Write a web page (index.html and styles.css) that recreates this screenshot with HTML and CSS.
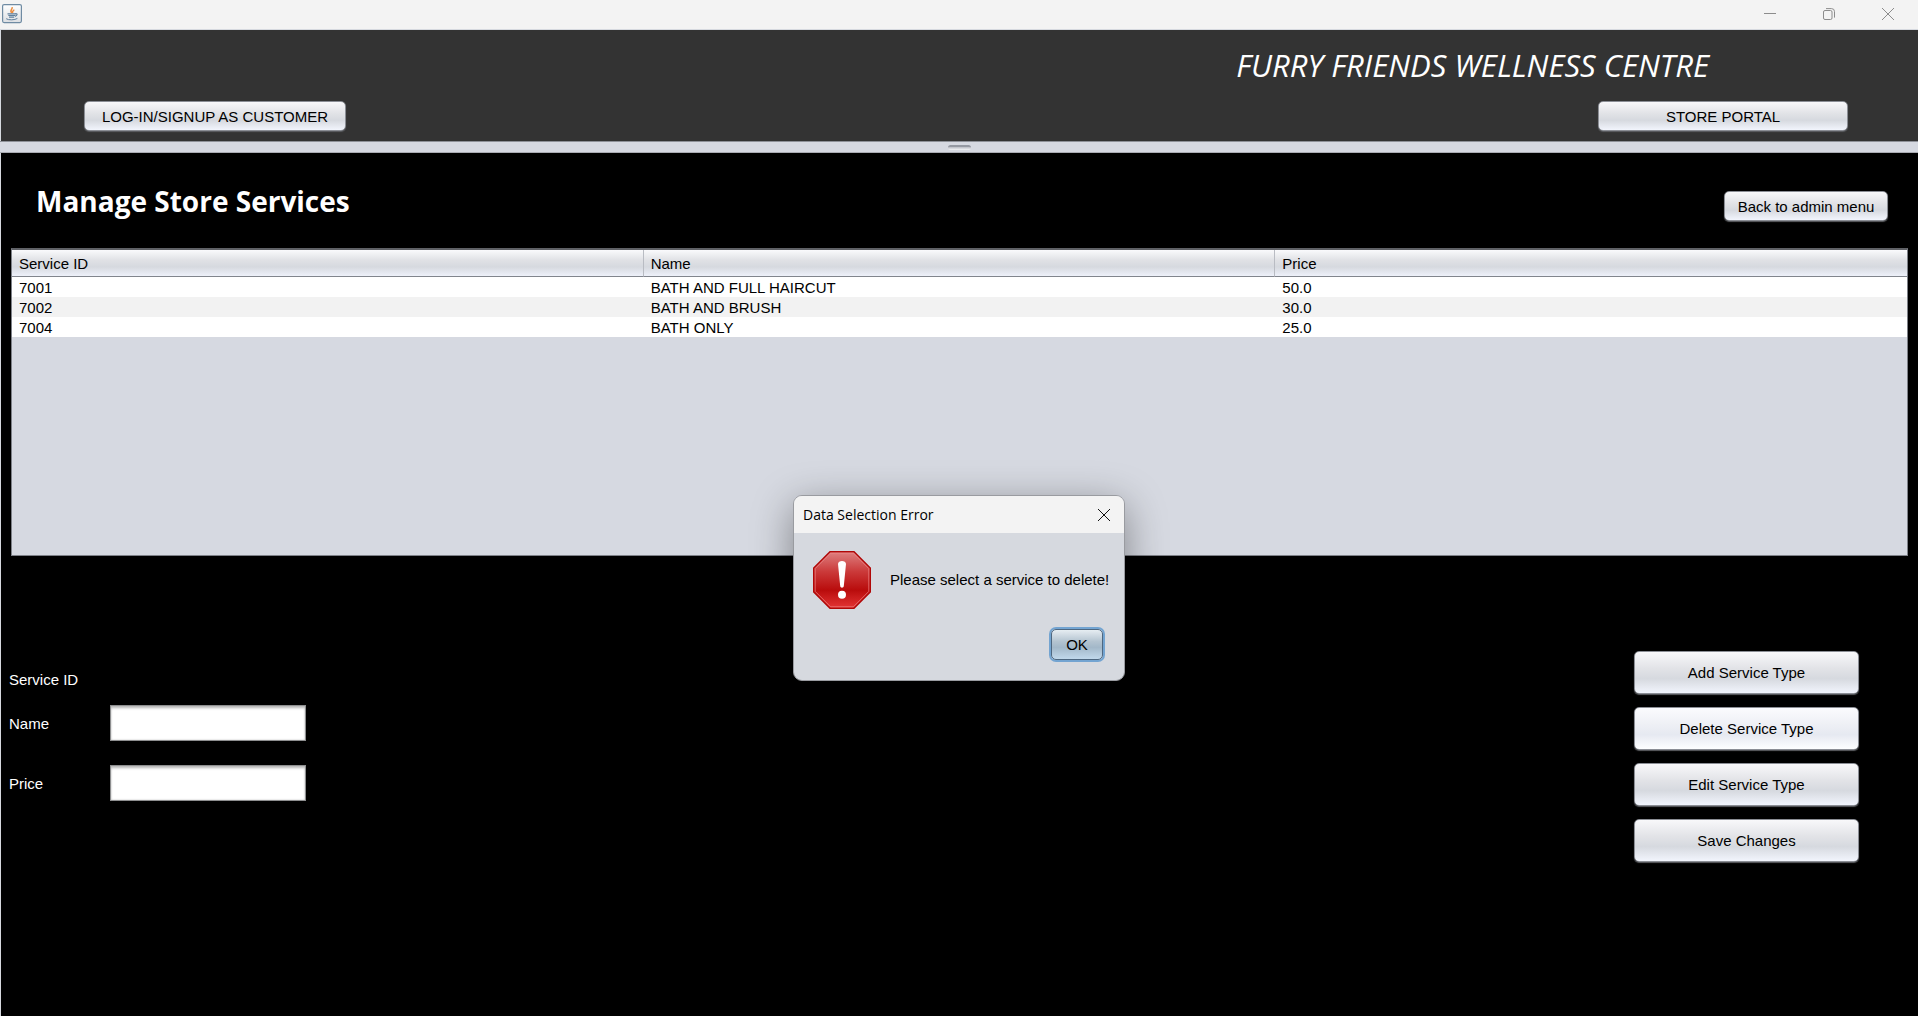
FILE: index.html
```html
<!DOCTYPE html>
<html lang="en">
<head>
<meta charset="utf-8">
<title>Furry Friends Wellness Centre</title>
<link rel="stylesheet" href="styles.css">
</head>
<body>
<div class="window">
  <div class="titlebar">
    <svg class="app-icon" viewBox="0 0 20 20" aria-hidden="true">
      <defs><linearGradient id="cup-bg" x1="0" y1="0" x2="0" y2="1"><stop offset="0" stop-color="#fff"/><stop offset="1" stop-color="#dcdfe3"/></linearGradient></defs>
      <rect x=".6" y=".6" width="18.8" height="18" rx="1.5" fill="url(#cup-bg)" stroke="#6f8ba3" stroke-width="1.2"/>
      <path d="M9.8 8.8C7.2 6.8 10.500 5.700 10.200 3.200M11.200 8.700C9.500 7.300 11.800 6.800 12 5.600" fill="none" stroke="#ec8b3c" stroke-width="1.500"/>
      <path d="M5.500 9.800h8.500M6.300 11.500h6.800M7 13.200h5.200M13.600 9.700c2.400-.3 1.600 2.100-.6 2.600" fill="none" stroke="#60809d" stroke-width="1.200"/>
      <path d="M4.200 14.700c2 1.600 8.800 1.500 11.200-.3" fill="none" stroke="#60809d" stroke-width="1"/>
    </svg>
    <div class="window-controls">
      <button class="window-control" type="button" aria-label="Minimize"><svg viewBox="0 0 12 12"><path d="M0 5.500h12"/></svg></button>
      <button class="window-control" type="button" aria-label="Restore"><svg viewBox="0 0 12 12"><rect x=".5" y="2.500" width="8.500" height="9" rx="1.500"/><path d="M3 .6h5.500q3 0 3 3v6"/></svg></button>
      <button class="window-control" type="button" aria-label="Close window"><svg viewBox="0 0 12 12"><path d="M0 0l12 12M12 0L0 12"/></svg></button>
    </div>
  </div>

  <header class="banner">
    <p class="brand">FURRY FRIENDS WELLNESS CENTRE</p>
    <nav class="banner-actions">
      <button class="button button-login" type="button">LOG-IN/SIGNUP AS CUSTOMER</button>
      <button class="button button-portal" type="button">STORE PORTAL</button>
    </nav>
  </header>

  <div class="splitter"><span class="splitter-grip"></span></div>

  <main class="panel">
    <div class="panel-head">
      <h1 class="panel-title">Manage Store Services</h1>
      <button class="button button-back" type="button">Back to admin menu</button>
    </div>

    <div class="table-pane">
      <table class="services">
        <thead><tr><th>Service ID</th><th>Name</th><th>Price</th></tr></thead>
        <tbody>
          <tr><td>7001</td><td>BATH AND FULL HAIRCUT</td><td>50.0</td></tr>
          <tr><td>7002</td><td>BATH AND BRUSH</td><td>30.0</td></tr>
          <tr><td>7004</td><td>BATH ONLY</td><td>25.0</td></tr>
        </tbody>
      </table>
    </div>

    <div class="editor">
      <form class="service-form">
        <span class="service-id">Service ID</span>
        <div class="field"><label for="name">Name</label><input id="name" type="text"></div>
        <div class="field"><label for="price">Price</label><input id="price" type="text"></div>
      </form>
      <div class="service-actions">
        <button class="button button-tall" type="button">Add Service Type</button>
        <button class="button button-tall button-hover" type="button">Delete Service Type</button>
        <button class="button button-tall" type="button">Edit Service Type</button>
        <button class="button button-tall" type="button">Save Changes</button>
      </div>
    </div>
  </main>

  <div class="dialog" role="alertdialog" aria-labelledby="dialog-title" aria-describedby="dialog-message">
    <div class="dialog-titlebar">
      <h2 class="dialog-title" id="dialog-title">Data Selection Error</h2>
      <button class="dialog-close" type="button" aria-label="Close"><svg viewBox="0 0 12 12"><path d="M0 0l12 12M12 0L0 12"/></svg></button>
    </div>
    <div class="dialog-body">
      <svg class="error-icon" viewBox="0 0 58 58" aria-hidden="true">
        <defs><linearGradient id="stop-red" x1="0" y1="0" x2="0" y2="1"><stop offset="0" stop-color="#de8080"/><stop offset=".35" stop-color="#cb3a3a"/><stop offset=".68" stop-color="#b90c0c"/><stop offset="1" stop-color="#e43535"/></linearGradient></defs>
        <path d="M17 .7h24L57.300 17v24L41 57.300H17L.7 41V17z" fill="url(#stop-red)" stroke="#b00808" stroke-width="1.400"/>
        <path d="M17.600 2.200h22.800L55.800 17.600v22.800L40.400 55.800H17.600L2.200 40.400V17.600z" fill="none" stroke="#e88" stroke-opacity=".7"/>
        <path d="M25 13c0-4 8-4 8 0l-2.200 22c-.2 2.300-3.400 2.300-3.600 0z" fill="#fff"/>
        <circle cx="29" cy="43.800" r="4" fill="#fff"/>
      </svg>
      <p class="dialog-message" id="dialog-message">Please select a service to delete!</p>
    </div>
    <div class="dialog-footer"><button class="button button-ok" type="button">OK</button></div>
  </div>
</div>
</body>
</html>
```
FILE: styles.css
```css
* { box-sizing: border-box; }

body {
  margin: 0;
  background: #000;
  color: #000;
  font: 15px/20px "Liberation Sans", Arial, sans-serif;
}

h1, h2, p { margin: 0; font-weight: normal; }

button, input { font: inherit; color: inherit; }

.window {
  position: relative;
  display: flex;
  flex-direction: column;
  min-height: 100vh;
}

/* Window frame */
.titlebar {
  display: flex;
  align-items: center;
  justify-content: space-between;
  height: 30px;
  padding: 0 1px 2px 2px;
  background: #f3f3f3;
  border-bottom: 1px solid #d6d9df;
}

.app-icon { width: 20px; height: 20px; }

.window-controls { display: flex; }

.window-control {
  display: grid;
  place-items: center;
  width: 59px;
  height: 28px;
  padding: 0;
  border: 0;
  background: none;
}

.window-control svg,
.dialog-close svg {
  width: 12px;
  height: 12px;
  overflow: visible;
  fill: none;
  stroke: #8c8c8c;
}

/* Buttons */
.button {
  height: 30px;
  padding: 1px 0 0;
  border: 1px solid #8b8e95;
  border-radius: 5px;
  background: linear-gradient(#f8f8fa, #e2e3e7 40%, #d6d9df 65%, #f2f5fd);
  box-shadow: 0 1px 1px #5c5e62;
}

.button-login { width: 262px; }
.button-portal { width: 250px; }
.button-back { width: 164px; }

.button-tall { width: 100%; height: 43px; }

.button-hover { background: linear-gradient(#fbfbfe, #eef0f5 40%, #e6e9f1 65%, #fdfeff); }

/* Banner */
.banner {
  display: flex;
  flex-direction: column;
  gap: 16px;
  height: 111px;
  padding: 15px 70px 0 83px;
  background: #333;
  border-left: 1px solid #d6d9df;
}

.brand {
  padding-right: 139px;
  color: #fff;
  font: italic 31px/40px "Open Sans", "Noto Sans", sans-serif;
  text-align: right;
}

.banner-actions { display: flex; justify-content: space-between; }

.splitter {
  display: flex;
  justify-content: center;
  height: 12px;
  padding-top: 3px;
  background: #d6d9e1;
  border-top: 1px solid #8f9299;
  border-bottom: 1px solid #aaacb3;
}

.splitter-grip {
  width: 23px;
  height: 5px;
  border-top: 2px solid #9599a2;
  border-radius: 3px;
  background: linear-gradient(#b9bcc4, #f3f4f6);
}

/* Services panel */
.panel {
  flex: 1;
  padding: 24px 8px 0;
  border-left: 1px solid #d6d9df;
  background: #000;
}

.panel-head {
  display: flex;
  align-items: flex-start;
  justify-content: space-between;
  height: 71px;
  padding: 0 22px 0 27px;
}

.panel-title {
  color: #fff;
  font: bold 28px/48px "Open Sans", "Noto Sans", sans-serif;
}

.button-back { margin-top: 14px; }

.table-pane {
  height: 308px;
  margin: 0 2px;
  border: 1px solid #7e8188;
  border-top: 2px solid #5f6166;
  background: #d6d9e1;
}

.services {
  width: 100%;
  border-collapse: separate;
  border-spacing: 0;
  table-layout: fixed;
  text-align: left;
}

.services th {
  height: 27px;
  padding: 1px 7px 0;
  border-bottom: 1px solid #81858d;
  border-right: 1px solid #b9bcc3;
  background: linear-gradient(#fafafc, #e0e1e5 40%, #d6d9df 65%, #eef1fa);
  font-weight: normal;
}

.services th:last-child { border-right: 0; }

.services td { height: 20px; padding: 2px 7px 0; line-height: 18px; background: #fff; }

.services tr:nth-child(even) td { background: #f2f2f2; }

/* Editor */
.editor {
  display: flex;
  align-items: flex-start;
  justify-content: space-between;
  padding: 95px 51px 0 0;
}

.service-form {
  display: flex;
  flex-direction: column;
  padding-top: 19px;
  color: #fff;
}

.service-id { padding-bottom: 15px; }

.field {
  display: grid;
  grid-template-columns: 101px 196px;
  align-items: center;
  height: 60px;
  padding-bottom: 24px;
}

.field label { padding-top: 2px; }

.field input {
  height: 36px;
  padding: 0 8px;
  border: 1px solid #8d8e8f;
  border-radius: 0;
  background: #fff;
  box-shadow: inset 0 3px 3px -1px #b4b4b4, inset 0 0 2px #bbb;
  color: #000;
}

.service-actions {
  display: grid;
  gap: 13px;
  width: 225px;
}

/* Error dialog */
.dialog {
  position: absolute;
  top: 495px;
  left: 50%;
  width: 332px;
  border: 1px solid #999ba0;
  border-radius: 9px;
  background: #d6d9df;
  box-shadow: 0 10px 40px #0006;
  overflow: hidden;
  transform: translateX(-50%);
}

.dialog-titlebar {
  display: flex;
  align-items: center;
  justify-content: space-between;
  height: 37px;
  padding: 0 14px 0 9px;
  background: #f3f3f3;
}

.dialog-title { font: 14px/20px "Open Sans", "Noto Sans", sans-serif; }

.dialog-close { display: flex; padding: 0; border: 0; background: none; }
.dialog-close svg { stroke: #111; }

.dialog-body {
  display: flex;
  align-items: center;
  gap: 19px;
  padding: 18px 14px 0 19px;
}

.error-icon { flex: none; width: 58px; height: 58px; }

.dialog-message { white-space: nowrap; }

.dialog-footer {
  display: flex;
  justify-content: flex-end;
  padding: 20px 21px 20px;
}

.button-ok {
  width: 52px;
  height: 31px;
  border-color: #4e6780;
  background: linear-gradient(#e6edf2, #b3c3d0 40%, #a3b8c9 60%, #c1d8eb);
  box-shadow: 0 0 0 2px #73a4d1;
}
```
